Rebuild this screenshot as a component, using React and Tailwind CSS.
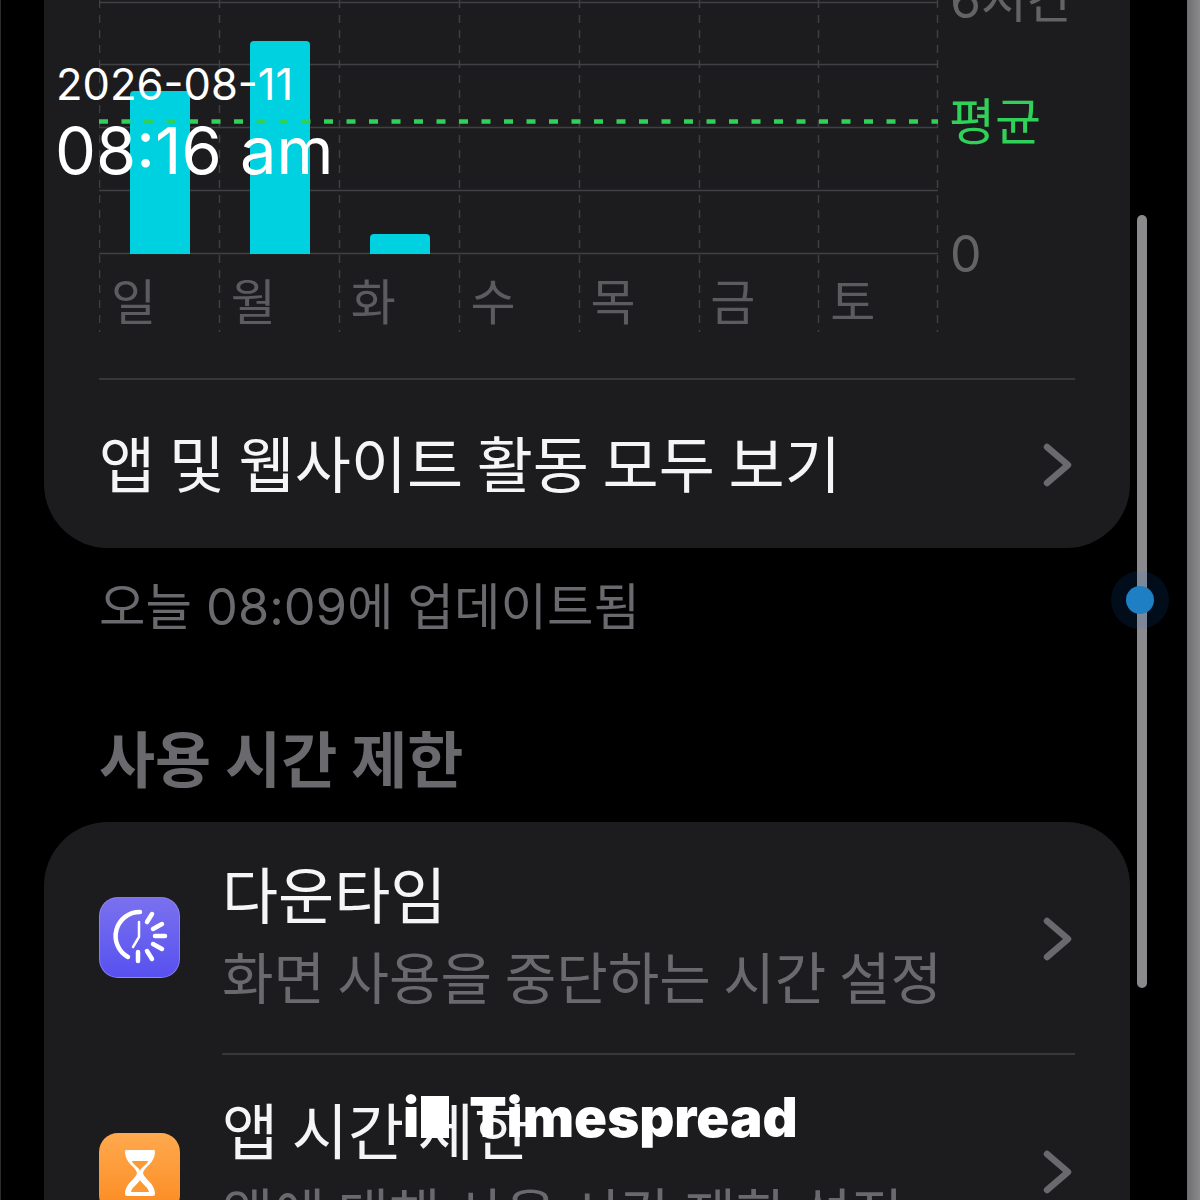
const KR = { fontFamily: '"Noto Sans CJK KR", "Noto Sans", sans-serif' };
const NUM = { fontFamily: 'Inter, "Noto Sans CJK KR", "Noto Sans", sans-serif' };

function Chevron() {
  return (
    <svg width="30" height="44" viewBox="0 0 30 44" fill="none" className="shrink-0">
      <path d="M5 4 L26 22 L5 40" stroke="#69696e" strokeWidth="6.5" strokeLinecap="round" strokeLinejoin="round" />
    </svg>
  );
}

function ChartGrid() {
  const xs = [0.5, 120.5, 240.5, 360.5, 480.5, 600.5, 719.5, 838.5];
  const ys = [2.5, 64.5, 127.5, 190.5, 253.5];
  return (
    <svg width="840" height="332" viewBox="0 0 840 332" className="block">
      {xs.map((x) => (
        <line key={x} x1={x} x2={x} y1="0" y2="332" stroke="#3f3f43" strokeWidth="1.5" strokeDasharray="8 7" />
      ))}
      {ys.map((y) => (
        <line key={y} x1="0" x2="839" y1={y} y2={y} stroke="#414145" strokeWidth="1.5" />
      ))}
      <path d="M31 254 V95 a4 4 0 0 1 4 -4 H87 a4 4 0 0 1 4 4 V254 Z" fill="#00d1e1" />
      <path d="M151 254 V45 a4 4 0 0 1 4 -4 H207 a4 4 0 0 1 4 4 V254 Z" fill="#00d1e1" />
      <path d="M271 254 V238 a4 4 0 0 1 4 -4 H327 a4 4 0 0 1 4 4 V254 Z" fill="#00d1e1" />
      <line x1="0" x2="839" y1="121.5" y2="121.5" stroke="#30d158" strokeWidth="4.5" strokeDasharray="9 13.5" />
    </svg>
  );
}

function DowntimeIcon() {
  return (
    <div className="w-[81px] h-[81px] rounded-[19px] border border-[#9a94f5]/60 bg-gradient-to-b from-[#7a70ee] to-[#5850f0] flex items-center justify-center shrink-0">
      <svg width="81" height="81" viewBox="0 0 81 81" fill="none" stroke="#fff" strokeWidth="4.5" strokeLinecap="round" className="shrink-0">
        <path d="M41 15 A24 24 0 0 0 29 60" />
        <path d="M40 25 V40 L34 50" strokeWidth="2.5" />
        <path d="M53 17 L48 25" />
        <path d="M63 27 L54 32" />
        <path d="M66 39 H56" />
        <path d="M63 52 L54 47" />
        <path d="M53 62 L48 54" />
        <path d="M39 64 V55" />
      </svg>
    </div>
  );
}

function HourglassIcon() {
  return (
    <div className="w-[81px] h-[81px] rounded-[19px] bg-gradient-to-b from-[#ffa94d] to-[#fb8a1a] flex items-start justify-center shrink-0 pt-[16px]">
      <svg width="32" height="48" viewBox="0 0 32 48" fill="none">
        <path d="M2 1 H30 Q31 1 31 3 C31 14 20 18 19 24 C20 30 31 34 31 45 Q31 47 29 47 H3 Q1 47 1 45 C1 34 12 30 13 24 C12 18 1 14 1 3 Q1 1 2 1 Z" fill="#fff" />
        <path d="M8 12 H24 C23 16 17 18 16 22 C15 18 9 16 8 12 Z" fill="#fb9a35" />
        <path d="M7 43 C8 38 14 35 16 31 C18 35 24 38 25 43 Z" fill="#fb9a35" />
      </svg>
    </div>
  );
}

export default function App() {
  const days = ["일", "월", "화", "수", "목", "금", "토"];
  return (
    <div className="relative w-[1200px] h-[1200px] overflow-hidden bg-black" style={KR}>
      <div className="flex h-full">
        <div className="w-[44px] shrink-0 border-l border-[#2c2c2e]" />
        <div className="w-[1086px] shrink-0 flex flex-col">
          {/* first card */}
          <section className="h-[548px] shrink-0 bg-[#1c1c1e] rounded-b-[64px] overflow-hidden pl-[55px] pr-[55px]">
            <div className="relative h-[378px]">
              <ChartGrid />
              <div className="absolute left-0 top-[267px] w-[840px] grid grid-cols-7 text-[49px] leading-[64px] text-[#5c5c60] pr-[1px]">
                {days.map((d) => (
                  <span key={d} className="pl-[12px]">{d}</span>
                ))}
              </div>
              <span className="absolute left-[851px] top-[-28px] text-[50px] leading-[56px] text-[#636366] whitespace-nowrap" style={NUM}>6시간</span>
              <span className="absolute left-[850px] top-[84px] text-[50px] leading-[68px] text-[#30d158] whitespace-nowrap">평균</span>
              <span className="absolute left-[851px] top-[224px] text-[50px] leading-[60px] text-[#636366]" style={NUM}>0</span>
            </div>
            <div className="border-t-2 border-[#38383a] h-[170px] flex items-center justify-between pr-[3px] pb-[4px]">
              <span className="text-[61px] leading-[80px] text-[#f5f5f7] whitespace-nowrap">앱 및 웹사이트 활동 모두 보기</span>
              <div className="mt-[6px]"><Chevron /></div>
            </div>
          </section>

          <p className="pl-[55px] mt-[29px] text-[50.5px] leading-[60px] text-[#69696e] whitespace-nowrap" style={NUM}>오늘 08:09에 업데이트됨</p>
          <h2 className="pl-[55px] mt-[80px] text-[61px] leading-[80px] font-bold text-[#69696e] whitespace-nowrap">사용 시간 제한</h2>

          {/* second card */}
          <section className="mt-[25px] flex-1 bg-[#1c1c1e] rounded-t-[64px] overflow-hidden pl-[55px] pr-[55px]">
            <div className="h-[231px] flex items-center gap-[42px] pr-[3px]">
              <DowntimeIcon />
              <div className="flex-1 min-w-0 pb-[12px] flex flex-col gap-[6px]">
                <div className="text-[61px] leading-[80px] text-[#f5f5f7] whitespace-nowrap">다운타임</div>
                <div className="text-[56px] leading-[72px] text-[#69696e] whitespace-nowrap">화면 사용을 중단하는 시간 설정</div>
              </div>
              <div className="mt-[2px]"><Chevron /></div>
            </div>
            <div className="ml-[123px] border-t-2 border-[#38383a]" />
            <div className="h-[200px] flex items-start gap-[42px] pt-[34px] pr-[3px]">
              <div className="mt-[44px]"><HourglassIcon /></div>
              <div className="flex-1 min-w-0 flex flex-col gap-[6px]">
                <div className="text-[61px] leading-[80px] text-[#f5f5f7] whitespace-nowrap">앱 시간 제한</div>
                <div className="text-[56px] leading-[72px] text-[#69696e] whitespace-nowrap">앱에 대해 사용 시간 제한 설정</div>
              </div>
              <div className="mt-[61px]"><Chevron /></div>
            </div>
          </section>
        </div>
        <div className="flex-1" />
        <div className="w-[13px] shrink-0 bg-gradient-to-r from-[#6e6e70] to-[#8a8a8c]" />
      </div>

      {/* scrollbar */}
      <div className="absolute left-[1137px] top-[215px] w-[10px] h-[773px] rounded-[5px] bg-[#8a8a8c]" />
      <div className="absolute left-[1111px] top-[571px] w-[58px] h-[58px] rounded-full bg-[#0a84ff]/10 flex items-center justify-center">
        <div className="w-[28px] h-[28px] rounded-full bg-[#1f7fc4]" />
      </div>

      {/* timestamp overlay */}
      <div className="absolute left-[56px] top-[57px] text-white" style={{ fontFamily: 'Inter, sans-serif' }}>
        <div className="text-[43.5px] leading-[54px] whitespace-nowrap">2026-08-11</div>
        <div className="text-[65px] leading-[80px] whitespace-nowrap -ml-[1px]">08:16 am</div>
      </div>

      {/* watermark */}
      <div className="absolute left-[403px] top-[1087px] flex items-center text-white font-black text-[54.5px] leading-[60px]" style={{ fontFamily: 'Inter, sans-serif' }}>
        <span>i</span>
        <span className="w-[28px] h-[42px] bg-white ml-[2px]" />
        <span className="pl-[20px] whitespace-nowrap">Timespread</span>
      </div>
    </div>
  );
}
